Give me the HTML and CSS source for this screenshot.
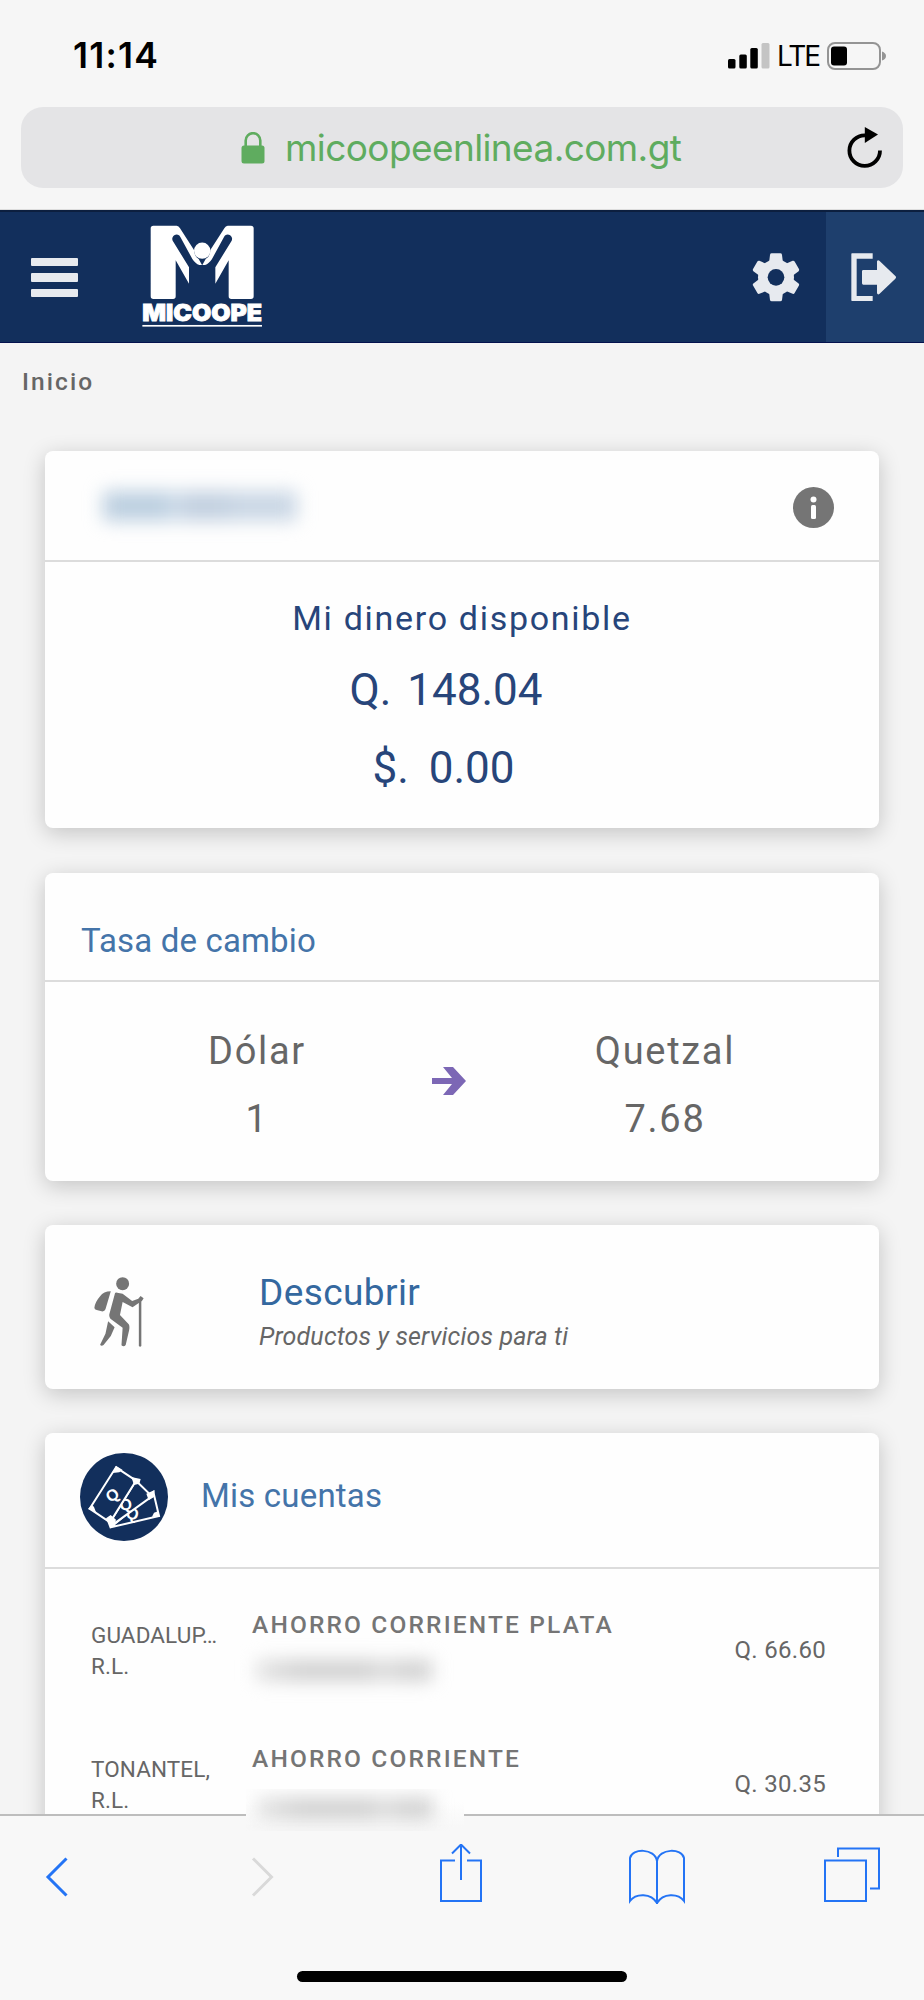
FILE: index.html
```html
<!DOCTYPE html>
<html lang="es">
<head>
<meta charset="utf-8">
<title>Micoope en línea</title>
<link rel="stylesheet" href="styles.css">
</head>
<body>
<div class="screen">
  <header class="browser">
    <div class="status">
      <span class="clock">11:14</span>
      <div class="indicators">
        <svg class="signal" viewBox="0 0 42 26"><rect y="16" width="7.5" height="9.5" rx="1.5"/><rect x="11.3" y="11.5" width="7.5" height="14" rx="1.5"/><rect x="22.3" y="5" width="7.5" height="20.500" rx="1.5"/><rect x="33.500" width="8" height="25.500" rx="1.5" fill="#c4c4c4"/></svg>
        <span class="network">LTE</span>
        <svg class="battery" viewBox="0 0 60 28"><rect x="1" y="1" width="52" height="26" rx="7" fill="none" stroke="#949494" stroke-width="2"/><rect x="4" y="4.500" width="16" height="19" rx="3"/><path d="M55 9.500q4 1.500 4 4.500t-4 4.500z" fill="#949494"/></svg>
      </div>
    </div>
    <div class="address">
      <svg class="lock" viewBox="0 0 24 32"><path d="M4.700 15V8.500a7.300 7.300 0 0 1 14.600 0V15" fill="none" stroke="#5fac5f" stroke-width="2.600"/><rect x=".5" y="13.500" width="23" height="18" rx="2.500" fill="#5fac5f"/></svg>
      <span class="domain">micoopeenlinea.com.gt</span>
      <svg class="reload" viewBox="0 0 36 42"><path d="M33 23.500A15.300 15.300 0 1 1 18 8.300" fill="none" stroke="#000" stroke-width="3.800"/><path d="M17.800 0L31 7.500 17.800 16z"/></svg>
    </div>
  </header>

  <nav class="navbar">
    <div class="menu"><i></i><i></i><i></i></div>
    <svg class="logo" viewBox="426 76 362 310" fill="#fff">
      <defs><path id="half" d="M460 78H530Q536 79 540 86L582 151Q582 170 596 178L606 196L598 196Q586 192 577 178L541 112A12.500 12.500 0 0 0 518 123L567 203V252L527 182V290Q527 298 519 298H460Q452 298 452 290V86Q452 78 460 78Z"/></defs>
      <use href="#half"/><use href="#half" transform="translate(1213 0) scale(-1 1)"/>
      <circle cx="606.500" cy="153" r="24.500"/>
      <text class="logo-name" x="427" y="365" textLength="359" lengthAdjust="spacingAndGlyphs">MICOOPE</text>
      <rect x="427" y="376" width="359" height="5"/>
    </svg>
    <svg class="gear" viewBox="-72 -73 144 146"><defs><path id="tooth" d="M-22 -35L-18 -68Q-17 -72 -13 -72H13Q17 -72 18 -68L22 -35Z"/></defs>
      <g fill="#e7eaef"><circle r="54"/><use href="#tooth"/><use href="#tooth" transform="rotate(60)"/><use href="#tooth" transform="rotate(120)"/><use href="#tooth" transform="rotate(180)"/><use href="#tooth" transform="rotate(240)"/><use href="#tooth" transform="rotate(300)"/></g><circle r="25" fill="#122f5c"/></svg>
    <div class="logout"><svg viewBox="1167 161 137 146" fill="#e7eaef"><path d="M1170 162H1232V178H1184V290H1232V305H1170Q1168 305 1168 303V164Q1168 162 1170 162ZM1204 212H1245V186Q1247 181 1252 184L1300 230Q1304 234 1300 238L1252 284Q1247 287 1245 282V256H1204Q1200 256 1200 252V216Q1200 212 1204 212Z"/></svg></div>
  </nav>

  <main class="content">
    <p class="crumb">Inicio</p>

    <section class="card">
      <div class="card-head holder">
        <span class="redacted owner"></span>
        <svg class="info" viewBox="0 0 41 41"><circle cx="20.500" cy="20.500" r="20.500" fill="#757575"/><circle cx="20.500" cy="12.500" r="3" fill="#fff"/><rect x="18" y="18" width="5" height="14" rx="1.500" fill="#fff"/></svg>
      </div>
      <div class="balance">
        <p class="balance-title">Mi dinero disponible</p>
        <p class="amount"><span>Q.</span><span>148.04</span></p>
        <p class="amount usd"><span>$.</span><span>0.00</span></p>
      </div>
    </section>

    <section class="card">
      <div class="card-head rate-head"><h2 class="rate-title">Tasa de cambio</h2></div>
      <div class="rates">
        <div><p>Dólar</p><p>1</p></div>
        <svg class="arrow" viewBox="0 0 35 30"><path d="M0 12H20L11 1H21L34 15 21 29H11L20 18H0Z" fill="#7c67b5"/></svg>
        <div><p>Quetzal</p><p>7.68</p></div>
      </div>
    </section>

    <section class="card discover">
      <svg class="hiker" viewBox="165 200 131 210" preserveAspectRatio="none" fill="#757575"><ellipse cx="240" cy="220" rx="17" ry="19.500"/><path d="M209 243Q190 243 181 258Q168 275 166 292Q166 297 172 299L185 303Q193 304 195 297Z"/><path d="M220 249Q221 245 226 247L240 250L265 272L281 265L287 257L295 264L291 271L266 291L240 275L233 314L256 342Q259 347 257 360L248 404Q243 411 237 405L240 352L208 325Q203 318 206 308Z"/><path d="M202 333L219 351L209 377L190 404Q184 409 181 403L195 370Z"/><path d="M282.500 268H289V407Q286 411 282.500 407Z"/></svg>
      <div><h2 class="discover-title">Descubrir</h2><p class="discover-sub">Productos y servicios para ti</p></div>
    </section>

    <section class="card accounts">
      <div class="card-head accounts-head">
        <svg class="bills" viewBox="150 100 264 264"><circle cx="282" cy="232" r="132" fill="#122f5c"/>
          <g class="bill"><path d="M370 217L387 289L242 323Z"/><text transform="translate(308 281) rotate(15)" dy="18">Q</text>
          <path d="M318 183L366 230L244 318L240 308Z"/><text transform="translate(287 253) rotate(-10)" dy="18">Q</text>
          <path d="M258 143L318 183L240 308L179 267Z"/><text transform="translate(246 225) rotate(-32)" dy="18">Q</text></g>
          <g fill="#fff"><path d="M258 138L278 151 268 158 248 160ZM304 172L332 178 328 192 312 196ZM174 268L186 255 192 262 198 278ZM228 296L242 286 258 300 252 318 240 327ZM349 222L374 211 372 232 356 242ZM390 292L366 291 372 279 384 275Z"/></g></svg>
        <h2 class="accounts-title">Mis cuentas</h2>
      </div>
      <div class="account">
        <p class="org">GUADALUP…<br>R.L.</p>
        <div class="product"><h3>AHORRO CORRIENTE PLATA</h3><span class="redacted number"></span></div>
        <p class="funds">Q. 66.60</p>
      </div>
      <div class="account">
        <p class="org">TONANTEL,<br>R.L.</p>
        <div class="product"><h3>AHORRO CORRIENTE</h3></div>
        <p class="funds">Q. 30.35</p>
      </div>
    </section>
  </main>

  <footer class="toolbar">
    <div class="mask"><span class="redacted number"></span></div>
    <div class="tools">
      <svg class="back" viewBox="0 0 28 62"><path d="M23.500 14.500L5 33 23.500 51.500"/></svg>
      <svg class="forward" viewBox="0 0 28 62"><path d="M4 14.500L22.500 33 4 51.500"/></svg>
      <svg class="share" viewBox="0 0 44 62"><path d="M16 16.500H2V57H42V16.500H28M22 36V1M13 9.500L22 .500 31 9.500"/></svg>
      <svg class="book" viewBox="0 0 58 62"><path d="M29 60V17C27 4 4 4 2 14V57C8 49 23 49 29 59M29 17C31 4 54 4 56 14V57C50 49 35 49 29 59"/></svg>
      <svg class="tabs" viewBox="0 0 58 62"><path d="M2 16.500H43V57H2ZM15 13V4.500H56V44.500H47"/></svg>
    </div>
    <div class="home"></div>
  </footer>
</div>
</body>
</html>
```
FILE: styles.css
```css
* { box-sizing: border-box; }
body { margin: 0; font-family: Roboto, sans-serif; background: #f4f4f4; }
p, h2, h3 { margin: 0; font-weight: 400; }
svg { display: block; flex: none; }
.screen { width: 924px; height: 2000px; display: flex; flex-direction: column; overflow: hidden; }

.browser { height: 210px; flex: none; background: #f6f6f6; font-family: Inter, sans-serif; border-bottom: 1px solid #ddd; }
.status { height: 107px; padding: 35px 37px 31px 73px; display: flex; justify-content: space-between; align-items: center; }
.clock { font-size: 35.500px; line-height: 41px; font-weight: 600; letter-spacing: 1.200px; }
.indicators { display: flex; align-items: center; }
.signal { width: 42px; height: 26px; }
.network { margin-left: 7px; padding-top: 1px; font-size: 28px; line-height: 41px; width: 50px; letter-spacing: -2px; }
.battery { width: 60px; height: 28px; }
.address { height: 81px; margin: 0 21px; padding: 0 20px 0 220px; border-radius: 22px; background: #e4e4e6; display: flex; align-items: center; }
.lock { width: 24px; height: 32px; }
.domain { margin-left: 20px; font-size: 37px; line-height: 81px; letter-spacing: -.6px; color: #5fac5f; }
.reload { width: 36px; height: 42px; margin-left: auto; }

.navbar { height: 133px; flex: none; background: #122f5c; border-top: 2px solid #0c1f3f; border-bottom: 1px solid #04124e; display: flex; align-items: center; padding-left: 31px; }
.menu { width: 47px; display: flex; flex-direction: column; gap: 7px; margin-top: 1px; }
.menu i { height: 8.500px; background: #e7eaef; border-radius: 1px; }
.logo { width: 120.700px; height: 103.300px; margin-left: 64px; }
.logo-name { font: 900 69px Inter, sans-serif; stroke: #fff; stroke-width: 2.500px; }
.gear { width: 48px; height: 48.700px; margin: 1px 0 0 auto; }
.logout { width: 98.500px; height: 130px; margin-left: 26px; padding: 1px 0 0 25px; background: #1e3f6d; display: flex; align-items: center; }
.logout svg { width: 45.700px; height: 48.700px; }

.content { height: 1471px; flex: none; overflow: hidden; padding: 19px 45px 0; }
.crumb { margin-left: -23px; height: 89px; line-height: 40px; font-size: 24.500px; font-weight: 500; letter-spacing: 2.100px; color: #666; }
.card { background: #fefefe; border-radius: 8px; margin-bottom: 44px; box-shadow: 0 5px 22px rgba(0,0,0,.2); }
.card-head { border-bottom: 2px solid #dcdcdc; display: flex; align-items: center; }
.redacted { display: block; filter: blur(9px); }
.holder { height: 111px; padding: 1px 45px 0 58px; justify-content: space-between; }
.owner { width: 194px; height: 30px; background: linear-gradient(90deg, #bccfe0 0 32%, #d2dfec 37%, #c2d0e0 43% 60%, #cad7e5 70%); }
.info { width: 41px; height: 41px; margin-top: 2px; }
.balance { height: 266px; margin-bottom: 45px; padding-top: 26px; text-align: center; color: #27457a; }
.balance-title { font-size: 34px; line-height: 60px; margin-bottom: 3px; letter-spacing: 1.700px; }
.amount { font-size: 44px; line-height: 78px; padding-right: 32px; display: flex; justify-content: center; gap: 16px; }
.usd { padding-right: 37px; gap: 20px; }
.rate-head { height: 109px; padding: 28px 36px 0; }
.rate-title { font-size: 33px; line-height: 40px; letter-spacing: .15px; color: #4474a9; }
.rates { height: 199px; padding: 35px 42px 0 64px; display: grid; grid-template-columns: 296px 88px 344px; text-align: center; font-size: 38px; line-height: 68px; letter-spacing: 1.700px; color: #666; }
.arrow { width: 35px; height: 30px; margin: 49px 0 0 27px; }
.discover { height: 164px; padding: 46px 49px; display: flex; }
.hiker { width: 50px; height: 70px; margin: 6px 115px 0 0; }
.discover-title { font-size: 37px; line-height: 43px; letter-spacing: .4px; color: #34689f; }
.discover-sub { font-size: 25px; line-height: 45px; letter-spacing: .15px; font-style: italic; color: #666; }
.accounts { height: 500px; }
.accounts-head { height: 136px; padding: 0 36px 6px 35px; margin-bottom: 14px; }
.bills { width: 88px; height: 88px; }
.bill path { fill: #122f5c; stroke: #fff; stroke-width: 6px; }
.bill text { font: 700 48px "Liberation Sans", sans-serif; fill: #fff; text-anchor: middle; }
.accounts-title { margin: -3px 0 0 33px; font-size: 33px; line-height: 40px; letter-spacing: .2px; color: #4474a9; }
.account { height: 134px; padding: 0 53px 0 46px; display: flex; align-items: center; color: #666; }
.org { width: 161px; padding-top: 1px; font-size: 22.500px; line-height: 31px; letter-spacing: .1px; }
.product { height: 80px; }
.product h3 { font-size: 24.500px; line-height: 30px; font-weight: 500; letter-spacing: 2.150px; color: #757575; white-space: nowrap; }
.number { width: 176px; height: 21px; margin: 20px 0 0 4px; background: linear-gradient(90deg, #e4e4e4, #cfcfcf 25% 65%, #dedede 70%, #d0d0d0 85%); }
.funds { margin-left: auto; font-size: 24px; line-height: 40px; letter-spacing: .3px; }

.toolbar { position: relative; height: 186px; flex: none; background: #f8f8f8; border-top: 2px solid #bdbdbd; }
.mask { position: absolute; left: 246px; top: -27px; width: 218px; height: 42px; overflow: hidden; background: linear-gradient(#fefefe 30%, #f8f8f8 90%); }
.mask .number { margin: 9px 0 0 11px; }
.tools { height: 154px; padding: 28px 0 0 43px; display: flex; }
.tools svg { height: 62px; fill: none; stroke: #2474f5; stroke-width: 2; }
.tools .back { width: 28px; stroke-width: 3; }
.tools .forward { width: 28px; margin-left: 178px; stroke: #d9d9d9; stroke-width: 3; }
.share { width: 44px; margin-left: 162px; }
.book { width: 58px; margin-left: 145px; }
.tabs { width: 58px; margin-left: 137px; }
.home { width: 330px; height: 11px; margin: 1px 0 0 297px; border-radius: 6px; background: #000; }
```
